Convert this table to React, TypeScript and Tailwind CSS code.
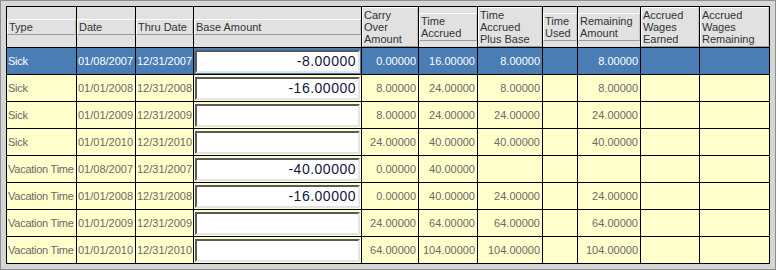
import React from "react";

type Row = {
  type: string;
  date: string;
  thru: string;
  base: string;
  carry: string;
  accrued: string;
  plusBase: string;
  used: string;
  remaining: string;
  earned: string;
  wagesRemaining: string;
};

const rows: Row[] = [
  { type: "Sick", date: "01/08/2007", thru: "12/31/2007", base: "-8.00000", carry: "0.00000", accrued: "16.00000", plusBase: "8.00000", used: "", remaining: "8.00000", earned: "", wagesRemaining: "" },
  { type: "Sick", date: "01/01/2008", thru: "12/31/2008", base: "-16.00000", carry: "8.00000", accrued: "24.00000", plusBase: "8.00000", used: "", remaining: "8.00000", earned: "", wagesRemaining: "" },
  { type: "Sick", date: "01/01/2009", thru: "12/31/2009", base: "", carry: "8.00000", accrued: "24.00000", plusBase: "24.00000", used: "", remaining: "24.00000", earned: "", wagesRemaining: "" },
  { type: "Sick", date: "01/01/2010", thru: "12/31/2010", base: "", carry: "24.00000", accrued: "40.00000", plusBase: "40.00000", used: "", remaining: "40.00000", earned: "", wagesRemaining: "" },
  { type: "Vacation Time", date: "01/08/2007", thru: "12/31/2007", base: "-40.00000", carry: "0.00000", accrued: "40.00000", plusBase: "", used: "", remaining: "", earned: "", wagesRemaining: "" },
  { type: "Vacation Time", date: "01/01/2008", thru: "12/31/2008", base: "-16.00000", carry: "0.00000", accrued: "40.00000", plusBase: "24.00000", used: "", remaining: "24.00000", earned: "", wagesRemaining: "" },
  { type: "Vacation Time", date: "01/01/2009", thru: "12/31/2009", base: "", carry: "24.00000", accrued: "64.00000", plusBase: "64.00000", used: "", remaining: "64.00000", earned: "", wagesRemaining: "" },
  { type: "Vacation Time", date: "01/01/2010", thru: "12/31/2010", base: "", carry: "64.00000", accrued: "104.00000", plusBase: "104.00000", used: "", remaining: "104.00000", earned: "", wagesRemaining: "" },
];

const headers: string[][] = [
  ["Type"],
  ["Date"],
  ["Thru Date"],
  ["Base Amount"],
  ["Carry", "Over", "Amount"],
  ["Time", "Accrued"],
  ["Time", "Accrued", "Plus Base"],
  ["Time", "Used"],
  ["Remaining", "Amount"],
  ["Accrued", "Wages", "Earned"],
  ["Accrued", "Wages", "Remaining"],
];

function HeaderCell({ lines }: { lines: string[] }) {
  return (
    <div className="flex items-center bg-[#e1e1e1]">
      <div className="w-full border-t border-l border-t-white border-l-white border-b border-b-[#9a9a9a] border-r border-r-[#c4c4c4] px-[1px] py-px text-[#333] leading-[12px]">
        {lines.map((l, i) => (
          <div key={i} className="whitespace-nowrap">{l}</div>
        ))}
      </div>
    </div>
  );
}

export default function App() {
  return (
    <div
      className="w-[776px] h-[270px] bg-[#d6d6d6] border border-[#8e8e8e] p-[5px] text-[11px]"
      style={{ fontFamily: '"Liberation Sans", Arial, sans-serif' }}
    >
      <div className="grid grid-cols-[69px_58px_57px_167px_56px_58px_64px_34px_62px_58px_69px] grid-rows-[40px_repeat(8,26px)] gap-px bg-black p-px">
        {headers.map((h, i) => (
          <HeaderCell key={i} lines={h} />
        ))}
        {rows.map((r, i) => {
          const sel = i === 0;
          const cell = sel
            ? "bg-[#4a7db4] text-white flex items-center whitespace-nowrap overflow-hidden"
            : "bg-[#ffffcc] text-[#6a6a66] flex items-center whitespace-nowrap overflow-hidden";
          const num = cell + " justify-end pr-[2px]";
          return (
            <React.Fragment key={i}>
              <div className={cell + " pl-px tracking-[-0.25px]"}>{r.type}</div>
              <div className={cell + " pl-px"}>{r.date}</div>
              <div className={cell + " pl-px"}>{r.thru}</div>
              <div className={cell + " px-px"}>
                <input
                  readOnly
                  value={r.base}
                  className="w-full h-[23px] bg-white border-2 border-t-[#5a5a5a] border-l-[#5a5a5a] border-b-[#e4e4e4] border-r-[#e4e4e4] text-right pr-[2px] text-[14px] tracking-[0.5px] text-[#14143c] outline-none"
                  style={{ fontFamily: '"Liberation Sans", Arial, sans-serif' }}
                />
              </div>
              <div className={num}>{r.carry}</div>
              <div className={num}>{r.accrued}</div>
              <div className={num}>{r.plusBase}</div>
              <div className={num}>{r.used}</div>
              <div className={num}>{r.remaining}</div>
              <div className={num}>{r.earned}</div>
              <div className={num}>{r.wagesRemaining}</div>
            </React.Fragment>
          );
        })}
      </div>
    </div>
  );
}
